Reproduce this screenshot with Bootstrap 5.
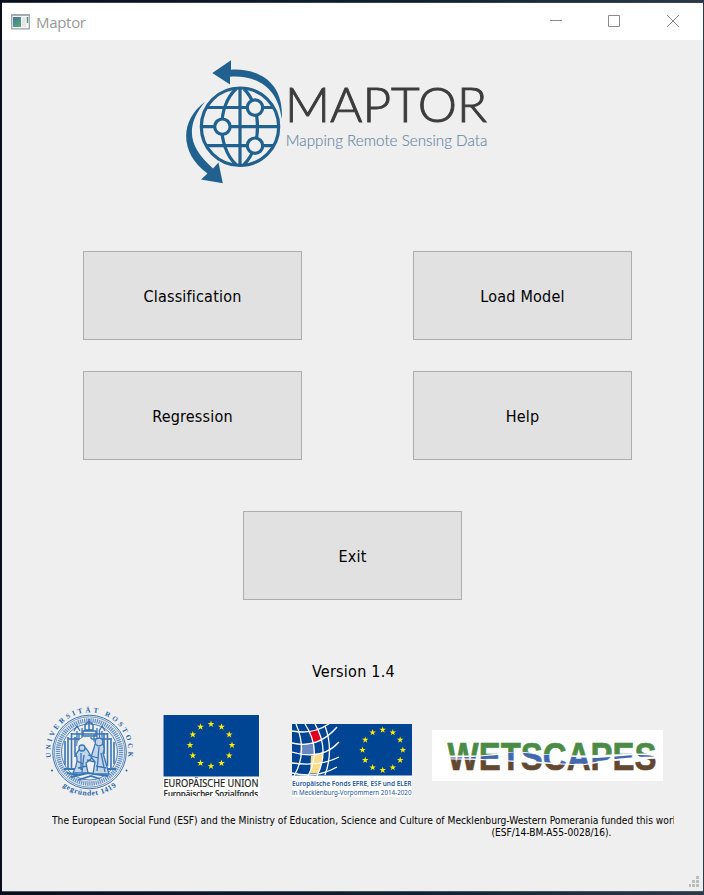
<!DOCTYPE html>
<html lang="en">
<head>
<meta charset="utf-8">
<meta name="viewport" content="width=device-width, initial-scale=1">
<title>Maptor</title>
<link href="https://cdn.jsdelivr.net/npm/bootstrap@5.3.0/dist/css/bootstrap.min.css" rel="stylesheet">
<style>
  body { height: 895px; padding: 2px 1px 3px 2px; overflow: hidden; color: #000;
    background: linear-gradient(90deg, #0a0d1c, #0f2233 60%, #2c3947);
    font-family: "DejaVu Sans Condensed", "DejaVu Sans", sans-serif; font-stretch: condensed; }
  .app-window { height: 890px; background: #efefef; border-top: 1px solid #3a424c; border-bottom: 1px solid #4a545e; }
  .title-bar { height: 37px; background: #fff; color: #999; font: 15px "Open Sans", sans-serif; padding-left: 9px; }
  .title-bar .app-name { margin-left: 6px; letter-spacing: -.3px; color: #999; }
  .brand { margin: 16px 0 0 182px; }
  .choices { grid-template-columns: 219px 219px; gap: 31px 111px; margin: 63px 0 0 81px; }
  .tile { width: 219px; height: 89px; background: #e1e1e1; border: 1px solid #adadad; border-radius: 0;
    color: #000; font-size: 16px; letter-spacing: .2px; padding: 2px 0 0 0; }
  .tile-exit { margin: 51px 0 0 241px; }
  .version { margin-top: 60px; font-size: 16px; line-height: 24px; letter-spacing: .25px; padding-left: 2px; }
  .sponsors { margin: 16px 0 0 38px; height: 100px; }
  .logo-esf { margin: 15px 0 0 25px; }
  .logo-fonds { margin: 24px 0 0 32px; }
  .logo-wet { margin: 30px 0 0 19px; }
  .funding { width: 622px; margin: 14px 0 0 50px; height: 26px; font-size: 10px; line-height: 12px; }
  .grip { margin: 30px 3px 0 0; }
  svg { display: block; flex: none; }
</style>
<script src="https://cdn.jsdelivr.net/npm/bootstrap@5.3.0/dist/js/bootstrap.bundle.min.js"></script>
</head>
<body>
<svg width="0" height="0" class="position-absolute" aria-hidden="true">
  <defs>
    <path id="star" d="M0-1 .225-.309 .951-.309 .363 .118 .588 .809 0 .382-.588 .809-.363 .118-.951-.309-.225-.309Z"/>
    <g id="ring" fill="#ffed00">
      <use href="#star" transform="translate(0 -21) scale(3.6)"/><use href="#star" transform="translate(10.5 -18.2) scale(3.6)"/>
      <use href="#star" transform="translate(18.2 -10.5) scale(3.6)"/><use href="#star" transform="translate(21 0) scale(3.6)"/>
      <use href="#star" transform="translate(18.2 10.5) scale(3.6)"/><use href="#star" transform="translate(10.5 18.2) scale(3.6)"/>
      <use href="#star" transform="translate(0 21) scale(3.6)"/><use href="#star" transform="translate(-10.5 18.2) scale(3.6)"/>
      <use href="#star" transform="translate(-18.2 10.5) scale(3.6)"/><use href="#star" transform="translate(-21 0) scale(3.6)"/>
      <use href="#star" transform="translate(-18.2 -10.5) scale(3.6)"/><use href="#star" transform="translate(-10.5 -18.2) scale(3.6)"/>
    </g>
  </defs>
</svg>

<main class="app-window d-flex flex-column">
  <header class="title-bar d-flex align-items-center">
    <svg width="19" height="16" viewBox="0 0 19 16">
      <defs><linearGradient id="scr" x2=".6" y2="1"><stop stop-color="#4a72a8"/><stop offset="1" stop-color="#4fa870"/></linearGradient></defs>
      <rect x=".7" y=".7" width="17.6" height="14.2" fill="#f6f6f6" stroke="#9a9fa6" stroke-width="1.2"/>
      <path d="M1 1.5H18" stroke="#a7adb5"/>
      <rect x="2" y="3" width="8" height="10" fill="url(#scr)"/>
      <rect x="11" y="3" width="4" height="10" fill="#e7e7e7"/>
      <rect x="15.8" y="3" width="1.4" height="6" fill="url(#scr)"/>
    </svg>
    <span class="app-name">Maptor</span>
    <svg class="ms-auto" width="154" height="37" viewBox="549 3 154 37" fill="none" stroke="#8c8c8c">
      <path d="M550 20.5H562M608.5 15.500H619.500V26.500H608.500ZM667 15 679 27M679 15 667 27"/>
    </svg>
  </header>

  <svg class="brand" width="310" height="132" viewBox="184 56 310 132">
    <g fill="none" stroke="#20618f" stroke-width="3.200">
      <circle cx="240" cy="126.700" r="38.700"/>
      <path d="M240 88V166M201 126.700H279M206 107.500H274M206 145.700H274"/>
      <path d="M236 89C217 106 217 147 236 164.500M244 89C262 106 262 147 244 164.500"/>
      <g fill="#efefef"><circle cx="222.400" cy="126.700" r="7.700"/><circle cx="255" cy="107.600" r="7.700"/><circle cx="255" cy="145.700" r="7.700"/></g>
    </g>
    <g fill="#20618f">
      <path d="M212.300 73 231 60.300V69.700C258 68 284.500 82 281.700 119C278 88 258 75 230 76.700V84.500Z"/>
      <path d="M205 101.700C179 121 180 154 207.500 173.500L201 179.500 222.800 183.200 218.500 162.500 213 168.500C188 147 185 126 205 101.700Z"/>
    </g>
    <text x="285" y="122.300" font-family="Lato" font-weight="300" font-size="47.500" textLength="202" lengthAdjust="spacingAndGlyphs" fill="#3c3c3c" stroke="#3c3c3c" stroke-width=".9">MAPTOR</text>
    <text x="285.800" y="145.500" font-family="Lato" font-weight="300" font-size="14.800" textLength="201.500" lengthAdjust="spacingAndGlyphs" fill="#6888a5" stroke="#6888a5" stroke-width=".15">Mapping Remote Sensing Data</text>
  </svg>

  <section class="choices d-grid">
    <button class="btn tile">Classification</button>
    <button class="btn tile">Load Model</button>
    <button class="btn tile">Regression</button>
    <button class="btn tile">Help</button>
  </section>
  <button class="btn tile tile-exit">Exit</button>
  <div class="version text-center">Version 1.4</div>

  <section class="sponsors d-flex align-items-start">
    <svg width="98" height="100" viewBox="40 700 98 100">
      <defs>
        <path id="arcTop" d="M51 757.500A39 39 0 1 1 128 757.500"/>
        <path id="arcLow" d="M49 768A43.500 43.500 0 0 0 130 768"/>
      </defs>
      <g fill="none" stroke="#3a75b6">
        <circle cx="89.500" cy="752" r="36.800" stroke-width="1"/>
        <circle cx="89.500" cy="752" r="35.200" stroke-width=".7"/>
        <circle cx="89.500" cy="752" r="31.500" stroke-width="4.500" stroke-dasharray="1.300 .8" opacity=".75"/>
        <circle cx="89.500" cy="752" r="28" stroke-width=".9"/>
        <path d="M65 741V765M68 737V768M71.500 733V768M75 737V757M104 733V754M107.500 733V766M111 738V768M114 742V764" stroke-width="1.600"/>
        <path d="M71 734H108M68 739H111M77 731V746M82 728V743M97 728V742M102 731V745M74 731 77 726 80 731M99 731 102 726 105 731M79 733V741M85 737V742M91 737V742M94 735V742M99.500 731V740" stroke-width="1.300"/>
        <path d="M85 730V725Q89 719 93 725V730ZM89 719V730M83 731H96V736H83Z" stroke-width="1.500"/>
        <path d="M64 769H76M103 769H116M67 773 78 775M71 777 88 773 108 776M78 780 91 776 100 779" stroke-width="1.800"/>
      </g>
      <path d="M77 748Q77 737 87 737Q95 739 95 748L91 757 84 752Z" fill="#efefef"/>
      <g fill="#c3d5e8" stroke="#3a75b6" stroke-width="1.300">
        <path d="M79 750Q84 744 88 751L92 758 86 763 88 773H73Q79 762 76 754ZM94 748Q95 740 101 742Q106 747 103 753L109 774H93L95 762 91 757Z"/>
        <path d="M81 753V770M84 755 82 772M99 747 97 771M101 753 105 772M88 755 98 758M87 760 95 762M77 761 83 764M78 768 87 766M96 766 106 768" fill="none"/>
        <circle cx="82" cy="748" r="3"/><circle cx="99" cy="742" r="3.800"/>
      </g>
      <g fill="#2463aa" font-family="Liberation Serif" font-weight="bold">
        <text font-size="7"><textPath href="#arcTop" textLength="134">UNIVERSITÄT ROSTOCK</textPath></text>
        <text font-size="7.500"><textPath href="#arcLow" startOffset="50%" text-anchor="middle" textLength="58">gegründet 1419</textPath></text>
        <circle cx="52" cy="770.500" r="1"/><circle cx="126.500" cy="770.500" r="1"/>
      </g>
    </svg>

    <svg class="logo-esf" width="97" height="81" viewBox="163 715 97 81">
      <path fill="#fff" d="M163 715H260V796H163Z"/><path fill="#004494" d="M163.500 715H259V776.500H163.500Z"/>
      <use href="#ring" x="211" y="745"/>
      <g font-family="Noto Sans" fill="#222">
        <text x="163.500" y="787.300" font-size="11.400" textLength="95" lengthAdjust="spacingAndGlyphs" stroke="#222" stroke-width=".2">EUROPÄISCHE UNION</text>
        <text x="163.500" y="797.200" font-size="9.300" font-weight="500" textLength="94.500" lengthAdjust="spacingAndGlyphs" stroke="#222" stroke-width=".2">Europäischer Sozialfonds</text>
      </g>
    </svg>

    <svg class="logo-fonds" width="121" height="73" viewBox="292 724 121 73">
      <path fill="#fff" d="M292 724H412V797H292Z"/><path fill="#004494" d="M292 724H412V775.500H292Z"/>
      <path fill="#e2001a" d="M308.500 732 317 729 321.500 740 313 743Z"/>
      <path fill="#6b87c2" d="M301 743.500Q307 745.500 314 744L315 754Q307 756 299.500 753.500Z"/>
      <path fill="#fddc87" d="M311 756 322.500 753.500Q322 765 318.500 773.500H310Z"/>
      <g fill="none" stroke="#fff" stroke-width="1.300">
        <path d="M292 731Q314 735 330 723M292 743Q318 749 337 727M292 752Q322 761 339 742M292 763Q319 767 339 757M292 773Q316 779 337 767"/>
        <path d="M296 724Q308 752 294 776M305 724Q322 750 308 776M315 724Q330 750 317 776M325 726Q334 750 325 775"/>
      </g>
      <use href="#ring" transform="translate(382.700 750) scale(.96)"/>
      <g font-family="Noto Sans" fill="#1d56a0">
        <text x="292" y="786" font-size="7.200" font-weight="600" textLength="119.500" lengthAdjust="spacingAndGlyphs">Europäische Fonds EFRE, ESF und ELER</text>
        <text x="292" y="795" font-size="7.200" textLength="119.500" lengthAdjust="spacingAndGlyphs">in Mecklenburg-Vorpommern 2014-2020</text>
      </g>
    </svg>

    <svg class="logo-wet" width="231" height="51" viewBox="432 730 231 51">
      <defs>
        <pattern id="strata" patternUnits="userSpaceOnUse" x="432" y="730" width="231" height="51">
          <rect width="231" height="51" fill="#4b8b45"/>
          <path fill="#fff" d="M0 25.500H48L66 23.500Q82 20.500 98 22.500L122 25 150 25.500 180 24.500Q200 23 231 23.500V51H0Z"/>
          <path fill="#4168ad" d="M14 27.500 40 27 66 25Q76 21.500 88 22.500L110 24.500 150 27.500 165 28 190 26Q210 24 225 26.500L205 27 188 28.500 168 31 150 34.500 130 33.500 104 31.500 66 30 40 28.500 14 28.500Z"/>
          <path fill="#624830" d="M0 29 48 30 76 31.500 108 33.500 150 35.500 175 31.500Q202 29 231 28.500V51H0Z"/>
        </pattern>
      </defs>
      <path fill="#fff" d="M432 730H663V781H432Z"/>
      <text x="447.500" y="769.500" font-family="Liberation Sans" font-weight="bold" font-size="38" textLength="209" lengthAdjust="spacingAndGlyphs" fill="url(#strata)" stroke="url(#strata)" stroke-width=".6">WETSCAPES</text>
    </svg>
  </section>

  <footer class="funding">
    <svg width="622" height="26" viewBox="52 814 622 26">
      <text x="52" y="824" textLength="626" lengthAdjust="spacingAndGlyphs">The European Social Fund (ESF) and the Ministry of Education, Science and Culture of Mecklenburg-Western Pomerania funded this work</text>
      <text x="491.500" y="836" textLength="120" lengthAdjust="spacingAndGlyphs">(ESF/14-BM-A55-0028/16).</text>
    </svg>
  </footer>
  <svg class="grip ms-auto mt-auto mb-1" width="11" height="11" viewBox="0 0 11 11" fill="#bdbdbd">
    <path d="M7 0H10V3H7ZM3 4H6V7H3ZM7 4H10V7H7ZM0 8H2V11H0ZM3 8H6V11H3ZM7 8H10V11H7Z"/>
  </svg>
</main>
</body>
</html>
